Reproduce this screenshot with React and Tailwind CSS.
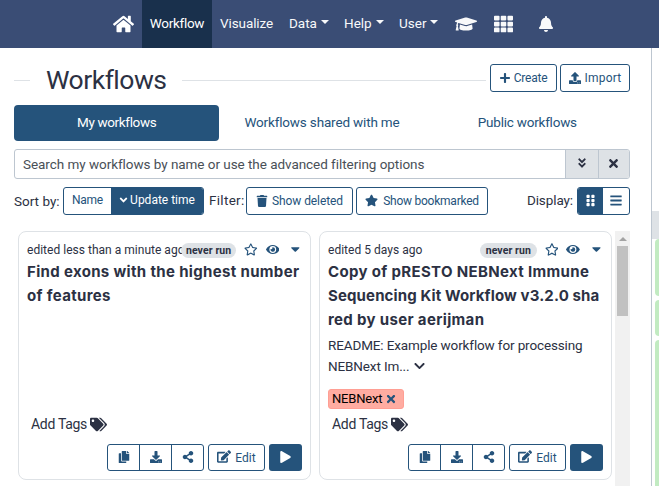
import {
  FaHome, FaGraduationCap, FaTh, FaBell, FaPlus, FaUpload, FaDownload, FaAngleDoubleDown, FaTimes, FaAngleDown,
  FaTrash, FaStar, FaGripVertical, FaBars, FaRegStar, FaEye, FaCaretDown, FaCopy, FaShareAlt, FaEdit, FaPlay,
  FaTags, FaChevronDown,
} from "react-icons/fa";

const outline = "flex items-center justify-center border border-[#25537b] bg-white text-[#25537b] whitespace-nowrap";

function Caret() {
  return <span className="ml-1 mb-[2px] border-x-4 border-t-4 border-x-transparent border-t-current" />;
}

function Header() {
  return (
    <header className="flex h-12 items-center bg-[#3a4d75] text-[13.5px] text-[#f8f9fa] whitespace-nowrap">
      <FaHome className="ml-[113px] h-5 w-[21px] text-white" />
      <div className="ml-2 flex h-12 w-[70px] items-center justify-center bg-[#19304c] pb-[2px] tracking-[-0.3px] text-white">Workflow</div>
      <div className="ml-2 w-[69px] pb-[2px] tracking-[-0.1px]">Visualize</div>
      <div className="flex w-[55px] items-center pb-[2px]">Data<Caret /></div>
      <div className="flex w-[55px] items-center pb-[2px]">Help<Caret /></div>
      <div className="flex w-[56px] items-center pb-[2px]">User<Caret /></div>
      <FaGraduationCap className="h-[22px] w-[22px]" />
      <FaTh className="ml-[17px] h-[20px] w-[19px]" />
      <FaBell className="ml-[25px] h-4 w-[16px]" />
    </header>
  );
}

function Card({ edited, title, children }) {
  return (
    <article className="flex h-[249px] w-[293px] shrink-0 flex-col rounded-lg border border-[#dee2e6] px-2 pt-[9px] pb-2">
      <div className="flex h-[19px] items-center">
        <span className="w-[154px] pb-px text-[12px] tracking-[0.02px] whitespace-nowrap">{edited}</span>
        <span className="z-10 flex h-[15px] w-[57px] items-center justify-center rounded-full bg-[#dee2e6] text-[10.5px] font-bold tracking-[0.1px] whitespace-nowrap">never run</span>
        <FaRegStar className="ml-[8px] mb-[2px] h-[13px] w-[14px] text-[#25537b]" />
        <FaEye className="ml-[8px] mb-[2px] h-[13px] w-[14px] text-[#25537b]" />
        <FaCaretDown className="ml-[10px] mb-[3px] h-[14px] w-[13px] text-[#25537b]" />
      </div>
      <h2 className="font-['Inter','Roboto',sans-serif] text-[15px] leading-6 font-bold tracking-[0.34px] whitespace-nowrap">{title}</h2>
      {children}
      <div className="mt-auto flex h-[21px] items-center pl-1 text-[14px] tracking-[-0.3px]">
        Add Tags <FaTags className="ml-[3px] h-[17px] w-[17px]" />
      </div>
      <div className="mt-[9px] flex h-[27px] justify-end">
        <div className={`${outline} w-[97px] divide-x divide-[#25537b] rounded-[3px]`}>
          <span className="flex h-full flex-1 items-center justify-center pb-[2px]"><FaCopy className="h-3 w-3" /></span>
          <span className="flex h-full flex-1 items-center justify-center pb-[2px]"><FaDownload className="h-3 w-3" /></span>
          <span className="flex h-full flex-1 items-center justify-center pb-[2px]"><FaShareAlt className="h-3 w-3" /></span>
        </div>
        <div className={`${outline} ml-1 w-[57px] gap-1 rounded-[3px] text-[12px]`}><FaEdit className="mb-[2px] h-[13px] w-[14px]" />Edit</div>
        <div className="ml-1 flex w-[33px] items-center justify-center rounded-[3px] bg-[#25537b] pb-[2px] text-white"><FaPlay className="h-3 w-[11px]" /></div>
      </div>
    </article>
  );
}

export default function App() {
  return (
    <div className="h-[486px] w-[659px] overflow-hidden bg-white font-['Roboto','Liberation_Sans',sans-serif] text-[#2c3143]">
      <Header />
      <div className="flex h-[438px]">
        <main className="w-[630px] shrink-0 pl-[14px]">
          <div className="flex h-[57px] items-center pt-[7px]">
            <span className="h-px w-4 bg-[#dee2e6]" />
            <h1 className="ml-4 w-[120px] text-[26.5px] leading-8 tracking-[-0.5px]">Workflows</h1>
            <span className="ml-4 h-px w-[304px] bg-[#dee2e6]" />
            <div className="mb-[4px] ml-1 flex h-7 gap-[3px] text-[12px]">
              <div className={`${outline} w-[67px] gap-1 rounded-[3px] pb-px`}><FaPlus className="h-3 w-[10px]" /><span className="tracking-[-0.2px]">Create</span></div>
              <div className={`${outline} w-[70px] gap-1 rounded-[3px] pb-px`}><FaUpload className="h-3 w-3" /><span className="tracking-[0.2px]">Import</span></div>
            </div>
          </div>
          <nav className="flex h-9 pb-px text-[13.5px] tracking-[-0.16px] text-[#25537b]">
            <div className="-mb-px flex flex-1 items-center justify-center rounded-[4px] bg-[#25537b] pb-px tracking-[-0.35px] text-white">My workflows</div>
            <div className="flex flex-1 items-center justify-center">Workflows shared with me</div>
            <div className="flex flex-1 items-center justify-center tracking-[-0.22px]">Public workflows</div>
          </nav>
          <div className="mt-2 flex h-[30px] overflow-hidden rounded-[3px] border border-[#bdc6d0] text-[13.5px]">
            <div className="flex w-[550px] items-center pl-2 tracking-[-0.05px] text-[#495057]">Search my workflows by name or use the advanced filtering options</div>
            <div className="flex w-[33px] items-center justify-center border-l border-[#bdc6d0] bg-[#dee2e6] pr-px pb-[2px]"><FaAngleDoubleDown className="h-3 w-3" /></div>
            <div className="flex flex-1 items-center justify-center border-l border-[#bdc6d0] bg-[#dee2e6] pr-px pb-[2px]"><FaTimes className="h-[13px] w-[11px]" /></div>
          </div>
          <div className="mt-2 flex h-7 items-center text-[13.5px] whitespace-nowrap">
            <span className="w-[49px]">Sort by:</span>
            <div className={`${outline} h-7 w-[141px] overflow-hidden rounded-[3px] text-[12px]`}>
              <span className="w-[47px] pb-[2px] text-center tracking-[-0.3px]">Name</span>
              <span className="flex h-full flex-1 items-center justify-center gap-[2px] bg-[#25537b] pb-[2px] text-white"><FaAngleDown className="h-3 w-[9px]" />Update time</span>
            </div>
            <span className="ml-[5px] w-[37px] pb-[2px] tracking-[0.3px]">Filter:</span>
            <div className={`${outline} h-7 w-[107px] gap-1 rounded-[3px] pb-px text-[12px]`}><FaTrash className="h-3 w-[12px]" /><span className="tracking-[-0.1px]">Show deleted</span></div>
            <div className={`${outline} ml-[3px] h-7 w-[132px] gap-[5px] rounded-[3px] pb-px text-[12px]`}><FaStar className="h-[13px] w-[13px]" /><span className="tracking-[-0.24px]">Show bookmarked</span></div>
            <span className="ml-auto mr-1 pb-[2px] tracking-[-0.1px]">Display:</span>
            <div className={`${outline} h-7 w-[53px] overflow-hidden rounded-[3px]`}>
              <span className="flex h-full w-[25px] items-center justify-center bg-[#25537b] pb-[2px] text-white"><FaGripVertical className="h-[13px] w-[9px]" /></span>
              <span className="flex h-full flex-1 items-center justify-center pb-px"><FaBars className="h-[13px] w-[12px]" /></span>
            </div>
          </div>
          <div className="mt-4 flex h-[255px] pl-1">
            <Card edited="edited less than a minute ago" title={<>Find exons with the highest number<br />of features</>} />
            <div className="w-2 shrink-0" />
            <Card
              edited="edited 5 days ago"
              title={<>Copy of pRESTO NEBNext Immune<br /><span className="tracking-[0.13px]">Sequencing Kit Workflow v3.2.0 sha</span><br />red by user aerijman</>}
            >
              <p className="mt-[3px] text-[13.5px] leading-[21px] tracking-[-0.13px] whitespace-nowrap">
                README: Example workflow for processing<br />NEBNext Im... <FaChevronDown className="mb-[2px] inline h-3 w-[13px]" />
              </p>
              <div className="mt-3 flex h-5 w-[76px] items-center rounded-[3px] border border-[#ff9f94] bg-[#ffaca1] pb-px pl-[3px] text-[13px] tracking-[-0.2px] text-black">
                NEBNext <FaTimes className="ml-1 h-3 w-[10px] text-[#25537b]" />
              </div>
            </Card>
            <div className="ml-[3px] flex w-[15px] shrink-0 flex-col items-center bg-[#f1f1f1]">
              <span className="mt-[6px] border-x-4 border-b-4 border-x-transparent border-b-[#a3a3a3]" />
              <span className="mt-[5px] h-[70px] w-[11px] bg-[#c1c1c1]" />
            </div>
          </div>
        </main>
        <aside className="ml-[21px] w-[8px] overflow-hidden border-l border-[#bdc6d0] pt-[163px]">
          <div className="h-7 bg-[#dee2e6]" />
          <div className="ml-[3px] h-[57px] rounded-l-[4px] bg-[#c2ebc2]" />
          <div className="mt-1 ml-[3px] h-[36px] rounded-l-[4px] bg-[#c2ebc2]" />
          <div className="mt-1 ml-[3px] h-[150px] rounded-l-[4px] bg-[#c2ebc2]" />
        </aside>
      </div>
    </div>
  );
}
